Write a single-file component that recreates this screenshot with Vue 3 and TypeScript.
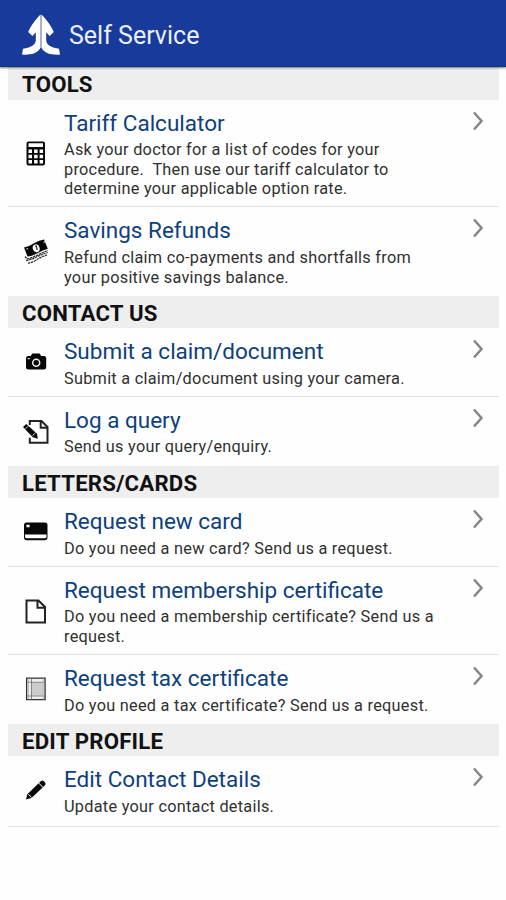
<script setup lang="ts">
type IconName = 'calculator' | 'money' | 'camera' | 'query' | 'card' | 'page' | 'ledger' | 'pencil'

interface Item {
  icon: IconName
  title: string
  text: string[]
}

interface Section {
  heading: string
  items: Item[]
}

const sections: Section[] = [
  {
    heading: 'TOOLS',
    items: [
      {
        icon: 'calculator',
        title: 'Tariff Calculator',
        text: [
          'Ask your doctor for a list of codes for your',
          'procedure.\u00a0 Then use our tariff calculator to',
          'determine your applicable option rate.',
        ],
      },
      {
        icon: 'money',
        title: 'Savings Refunds',
        text: ['Refund claim co-payments and shortfalls from', 'your positive savings balance.'],
      },
    ],
  },
  {
    heading: 'CONTACT US',
    items: [
      { icon: 'camera', title: 'Submit a claim/document', text: ['Submit a claim/document using your camera.'] },
      { icon: 'query', title: 'Log a query', text: ['Send us your query/enquiry.'] },
    ],
  },
  {
    heading: 'LETTERS/CARDS',
    items: [
      { icon: 'card', title: 'Request new card', text: ['Do you need a new card? Send us a request.'] },
      {
        icon: 'page',
        title: 'Request membership certificate',
        text: ['Do you need a membership certificate? Send us a', 'request.'],
      },
      { icon: 'ledger', title: 'Request tax certificate', text: ['Do you need a tax certificate? Send us a request.'] },
    ],
  },
  {
    heading: 'EDIT PROFILE',
    items: [{ icon: 'pencil', title: 'Edit Contact Details', text: ['Update your contact details.'] }],
  },
]
</script>

<template>
  <div class="screen">
    <header class="bar">
      <svg class="logo" viewBox="0 0 40 42">
        <path d="M19.600 0.500C15.500 4.500 10 11 7.200 18l4.200 4 3.400-3.800v8.300c-.4 4-3.800 6-9 7.500l-3.800.8L1 40.500c6 .6 15.500 0 18.600-7z" />
        <path d="M20.400 .500C24.500 4.500 30 11 32.800 18l-4.200 4-3.400-3.800v8.300c.4 4 3.800 6 9 7.500l3.800.8L39 40.500c-6 .6-15.500 0-18.600-7z" />
        <path class="seam" d="M20 1v33" />
      </svg>
      <h1>Self Service</h1>
    </header>
    <main>
      <section v-for="section in sections" :key="section.heading">
        <h2>{{ section.heading }}</h2>
        <article v-for="item in section.items" :key="item.title" class="row">
          <div class="icon">
            <svg v-if="item.icon === 'calculator'" viewBox="0 0 28 28">
              <path fill-rule="evenodd" d="M6.500 2.500h14.500a2 2 0 0 1 2 2v20a2 2 0 0 1-2 2H6.500a2 2 0 0 1-2-2V4.500a2 2 0 0 1 2-2zM6.500 4.300v3.700h14.500V4.300zM6.500 10.500v3.500h3.500v-3.500zm5.600 0v3.500h3.500v-3.500zm5.500 0v3.500h3.500v-3.500zM6.500 15.800v3.400h3.500v-3.400zm5.600 0v3.400h3.500v-3.400zm5.500 0v3.400h3.500v-3.400zM6.500 21v3.400h3.500V21zm5.600 0v3.400h3.500V21zm5.500 0v3.400h3.500V21z" />
            </svg>
            <svg v-else-if="item.icon === 'money'" viewBox="0 0 28 28">
              <path d="M2 10.500Q8 9 12.500 6T22 2.500l3.800 9.300q-5 1.200-10 4.200T5.500 19.500z" />
              <path class="thin dashed" d="M3 19.500l2 2.300q5-.8 10.500-3.800t10.300-4.300M4 23.500q6-1 11-3.700t10.500-4.200M6 26.300q5-1 9.500-4t9.500-4.200" />
              <ellipse cx="14.200" cy="11.200" rx="3.400" ry="4" fill="#fff" transform="rotate(-18 14.200 11.200)" />
              <path class="thin" d="M13.200 9.400l1-.4 1 4" />
              <path d="M4.500 12l1.500-.4M21.500 5.200l1.500-.4" stroke="#fff" stroke-width="1" />
            </svg>
            <svg v-else-if="item.icon === 'camera'" viewBox="0 0 28 28">
              <path d="M10.300 5.500h7.300l1.700 2.500H22q2.200 0 2.200 2.200v9q0 2.300-2.200 2.300H6.200Q4 21.500 4 19.200v-9q0-2.200 2.200-2.200h2.400z" />
              <circle cx="14.200" cy="14.700" r="3.500" fill="none" stroke="#eee" stroke-width="1.500" />
              <path d="M5.600 10.700h2.200" stroke="#fff" stroke-width="1" />
            </svg>
            <svg v-else-if="item.icon === 'query'" viewBox="0 0 28 28">
              <path class="line" d="M7.800 8V4H19.500l6 6V25.700H7.800v-5M18.700 4v6.800h6.800" />
              <path d="M1 10l3.300-3L15 16.700l.8 5-5-1.500z" />
              <path d="M3.300 11.900l3-2.700M10.500 18.700l3-3" stroke="#fff" stroke-width=".8" />
            </svg>
            <svg v-else-if="item.icon === 'card'" viewBox="0 0 28 28">
              <path fill-rule="evenodd" d="M4.500 4.500h18.500Q25.500 4.500 25.500 7v12.300q0 3-2.800 3H4.800q-2.800 0-2.800-3V7Q2 4.500 4.500 4.500zM3 16.500v2.200q0 1.500 1.800 1.500h17.900q1.800 0 1.800-1.500v-2.200zM4.400 6.700v2.600h3.200V6.700z" />
            </svg>
            <svg v-else-if="item.icon === 'page'" viewBox="0 0 28 28">
              <path class="line" d="M4.500 3.500H16.500l6.500 6.500v15.500H4.500zM15.500 3.500v7.200h7.500" />
            </svg>
            <svg v-else-if="item.icon === 'ledger'" viewBox="0 0 28 28">
              <path d="M4.600 3.100h18.500v21.500h-18.500z" fill="#eee" stroke="#333" stroke-width="1.300" />
              <path d="M9.800 7.800h11.200v12.700H9.800z" fill="#ccc" />
              <path d="M9.500 3.500v21M5 7.300h18M5 21h18" fill="none" stroke="#777" stroke-width=".9" />
              <path d="M6.500 3.500v21M21.300 3.500v21" stroke="#aaa" stroke-width=".7" />
            </svg>
            <svg v-else viewBox="0 0 28 28">
              <path d="M4 23.500l1.300-5.300L19 5q1.500-1.300 3 .2l1 1.200q1.300 1.500 0 2.800L9.500 22z" />
              <path d="M16.700 7l4.200 4.400M6.500 18.200l3 3.300" stroke="#fff" stroke-width="1" />
            </svg>
          </div>
          <div class="copy">
            <h3>{{ item.title }}</h3>
            <p v-for="line in item.text" :key="line">{{ line }}</p>
          </div>
          <svg class="chevron" viewBox="0 0 12 20"><path d="M2 1.500l7.500 8.500L2 18.500" /></svg>
        </article>
      </section>
    </main>
  </div>
</template>

<style>
body {
  margin: 0;
  background: #fff;
}
</style>

<style scoped>
.screen {
  width: 506px;
  height: 900px;
  overflow: hidden;
  background: #fefefe;
  font-family: Roboto, 'Liberation Sans', sans-serif;
}

.bar {
  position: relative;
  display: flex;
  align-items: center;
  box-sizing: border-box;
  height: 67px;
  padding: 4px 0 0 21px;
  background: #183a9b;
  border-bottom: 1px solid #12308b;
  box-shadow: 0 1px 2px rgba(0, 0, 0, 0.5);
}

.logo {
  width: 40px;
  height: 42px;
  fill: #fff;
}

.seam {
  stroke: #a9b4cf;
  stroke-width: 1.3;
}

h1,
h2,
h3,
p {
  margin: 0;
  white-space: nowrap;
}

h1 {
  margin: 0 0 0 8px;
  color: #e9efff;
  font-size: 25px;
  font-weight: 400;
}

main {
  padding: 0 7px 0 8px;
}

h2 {
  box-sizing: border-box;
  height: 32.7px;
  padding-left: 14px;
  background: #eee;
  color: #111;
  font-size: 22.2px;
  font-weight: 700;
  letter-spacing: 0.2px;
  line-height: 34.5px;
}

.row {
  display: flex;
  box-sizing: border-box;
  padding: 9px 15px 8.5px 0;
  border-bottom: 1px solid #e2e2e2;
}

.row:last-child {
  border-bottom-color: transparent;
}

section:last-child .row {
  padding-bottom: 11px;
  border-bottom-color: #e2e2e2;
}

.icon {
  display: flex;
  align-items: center;
  box-sizing: border-box;
  width: 56px;
  padding-left: 13.5px;
}

.icon svg {
  width: 28px;
  height: 28px;
  fill: #080808;
}

.icon .line {
  fill: none;
  stroke: #222;
  stroke-width: 2;
}

.icon .thin {
  fill: none;
  stroke: #333;
  stroke-width: 1.3;
}

.icon .dashed {
  stroke-dasharray: 2.4 0.7;
}

.copy {
  flex: 1;
}

h3 {
  height: 30.5px;
  color: #0d417d;
  font-size: 22.5px;
  font-weight: 400;
  line-height: 28px;
}

p {
  height: 19.6px;
  color: #303030;
  font-size: 16.3px;
  letter-spacing: 0.27px;
  line-height: 21px;
}

.chevron {
  width: 12px;
  height: 20px;
  margin-top: 2px;
  fill: none;
  stroke: #858585;
  stroke-width: 2.5;
}
</style>
